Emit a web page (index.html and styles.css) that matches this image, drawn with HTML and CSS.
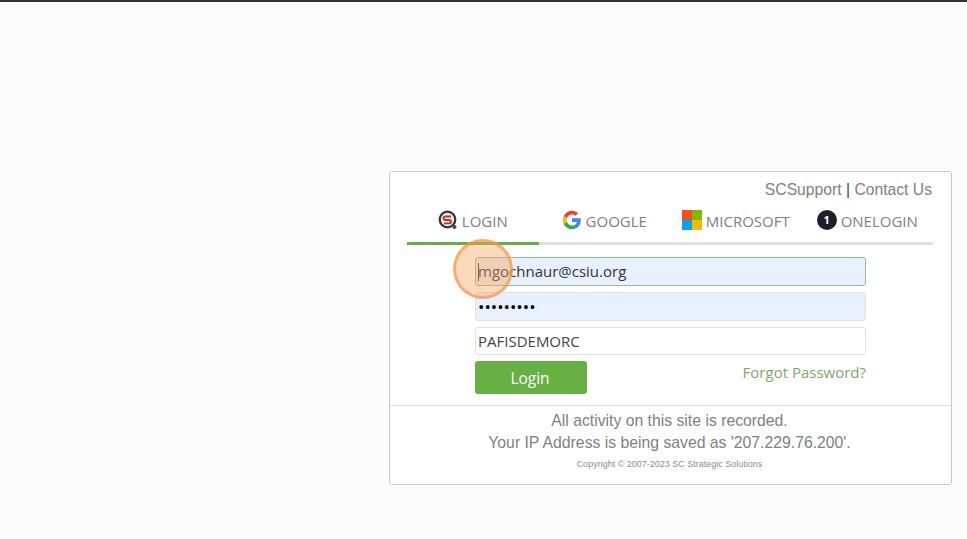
FILE: index.html
```html
<!DOCTYPE html>
<html lang="en">
<head>
    <meta charset="UTF-8">
    <meta name="viewport" content="width=device-width, initial-scale=1.0">
    <title>Login</title>
    <link rel="stylesheet" href="styles.css">
</head>
<body>
<div class="topbar"></div>

<div class="card">
    <div class="support"><span>SCSupport</span> <span class="pipe">|</span> <span>Contact Us</span></div>

    <div class="tabs">
        <div class="tab active">
            <svg class="icon" viewBox="0 0 20 20">
                <circle cx="9.500" cy="9.500" r="7.800" fill="#f1e9e5" stroke="#33302f" stroke-width="2.200"/>
                <circle cx="16.500" cy="17" r="2" fill="#4a4644"/>
                <path d="M13 6.500H7.500Q5.500 6.500 5.500 8.200T7.500 10H11Q13 10 13 11.600T11 13.400H6" fill="none" stroke="#a5402f" stroke-width="1.800"/>
            </svg>
            <span>LOGIN</span>
        </div>
        <div class="tab">
            <svg class="icon" viewBox="0 0 48 48">
                <path fill="#4285F4" d="M45.100 24.500c0-1.600-.1-3.100-.4-4.500H24v8.500h11.800c-.5 2.800-2 5.100-4.400 6.700v5.500h7.100c4.200-3.800 6.600-9.500 6.600-16.200z"/>
                <path fill="#34A853" d="M24 46c5.900 0 10.900-2 14.500-5.300l-7.100-5.500c-2 1.300-4.500 2.100-7.400 2.100-5.700 0-10.500-3.800-12.300-9H4.400v5.700C8 41.100 15.400 46 24 46z"/>
                <path fill="#FBBC05" d="M11.700 28.300c-.5-1.300-.7-2.800-.7-4.300s.3-3 .7-4.300v-5.700H4.400C2.900 17 2 20.400 2 24s.9 7 2.400 10l7.300-5.700z"/>
                <path fill="#EA4335" d="M24 10.700c3.200 0 6.100 1.100 8.400 3.300l6.300-6.300C34.900 4.200 29.900 2 24 2 15.400 2 8 6.900 4.400 14l7.300 5.700c1.800-5.200 6.600-9 12.300-9z"/>
            </svg>
            <span>GOOGLE</span>
        </div>
        <div class="tab">
            <div class="ms-logo"><i class="ms-red"></i><i class="ms-green"></i><i class="ms-blue"></i><i class="ms-yellow"></i></div>
            <span>MICROSOFT</span>
        </div>
        <div class="tab">
            <div class="one-logo">1</div>
            <span>ONELOGIN</span>
        </div>
    </div>

    <form class="form">
        <div class="field autofill focused"><span class="caret"></span>mgochnaur@csiu.org</div>
        <div class="field autofill dots">•••••••••</div>
        <div class="field last">PAFISDEMORC</div>
        <div class="actions">
            <button type="button" class="login-btn">Login</button>
            <a class="forgot">Forgot Password?</a>
        </div>
    </form>

    <div class="notice">
        <p>All activity on this site is recorded.</p>
        <p>Your IP Address is being saved as '207.229.76.200'.</p>
        <p class="copyright">Copyright © 2007-2023 SC Strategic Solutions</p>
    </div>
</div>

<!-- click marker from the recording -->
<div class="marker"></div>
</body>
</html>
```

FILE: styles.css
```css
body {
    margin: 0;
    background: #fcfcfc;
    font-family: "Open Sans", "Noto Sans", sans-serif;
    height: 539px;
    overflow: hidden;
}

.topbar {
    height: 2px;
    background: #333;
}

.card {
    box-sizing: border-box;
    width: 563px;
    height: 314px;
    margin: 169px 0 0 389px;
    background: #fff;
    border: 1px solid #c9c9c9;
    border-radius: 3px;
    padding: 0 18px 0 17px;
}

.support {
    font-family: "Liberation Sans", Arial, sans-serif;
    font-size: 15.700px;
    color: #808080;
    text-align: right;
    line-height: 18px;
    padding: 9px 1px 0 0;
}

.pipe {
    color: #444;
}

.tabs {
    display: flex;
    margin-top: 7px;
    border-bottom: 3px solid #dedede;
    height: 36px;
}

.tab {
    flex: 1;
    display: flex;
    justify-content: center;
    align-items: flex-start;
    gap: 4px;
    height: 36px;
    padding-top: 4px;
    box-sizing: border-box;
    font-size: 15px;
    line-height: 22px;
    color: #808080;
}

.tab.active {
    height: 39px;
    border-bottom: 3px solid #68ab4b;
}

.icon {
    width: 20px;
    height: 20px;
}

.ms-logo {
    display: grid;
    grid-template-columns: 10px 10px;
    grid-template-rows: 10px 10px;
}

.ms-red { background: #f25022; }
.ms-green { background: #7fba00; }
.ms-blue { background: #00a4ef; }
.ms-yellow { background: #ffb900; }

.one-logo {
    width: 20px;
    height: 20px;
    border-radius: 50%;
    background: #1c1f2a;
    color: #fff;
    font-size: 11px;
    font-weight: 700;
    line-height: 20px;
    text-align: center;
}

.form {
    display: flex;
    flex-direction: column;
    gap: 6px;
    margin: 12px 67px 0 68px;
}

.field {
    box-sizing: border-box;
    height: 29px;
    padding: 0 2px;
    border: 1px solid #e0e0e0;
    border-radius: 3px;
    background: #fff;
    color: #444;
    font-size: 15px;
    line-height: 27px;
    display: flex;
    align-items: center;
}

.field.last {
    height: 28px;
}

.autofill {
    background: #e8f0fe;
    color: #333;
}

.focused {
    border-color: #8fc089;
}

.caret {
    width: 1px;
    height: 18px;
    background: #333;
    margin-right: -1px;
}

.dots {
    color: #000;
    font-size: 17px;
}

.actions {
    display: flex;
    justify-content: space-between;
    align-items: flex-start;
}

.login-btn {
    width: 112px;
    height: 33px;
    border: none;
    border-radius: 3px;
    background: #66b044;
    color: #fff;
    font-family: inherit;
    font-size: 15.500px;
    padding-right: 8px;
}

.forgot {
    color: #7ba86a;
    font-size: 15px;
    line-height: 22px;
}

.notice {
    margin: 11px -18px 0 -17px;
    border-top: 1px solid #dedede;
    padding: 4px 2px 0 0;
    text-align: center;
    font-family: "Liberation Sans", Arial, sans-serif;
    font-size: 15.750px;
    color: #808080;
}

.notice p {
    margin: 0;
    line-height: 22px;
}

.notice .copyright {
    margin-top: 1px;
    font-size: 9px;
    line-height: 18px;
    color: #8c8c8c;
}

.marker {
    position: absolute;
    left: 453px;
    top: 239px;
    width: 60px;
    height: 60px;
    box-sizing: border-box;
    border: 3px solid rgba(240, 150, 70, 0.65);
    border-radius: 50%;
    background: rgba(245, 165, 90, 0.42);
}
```
